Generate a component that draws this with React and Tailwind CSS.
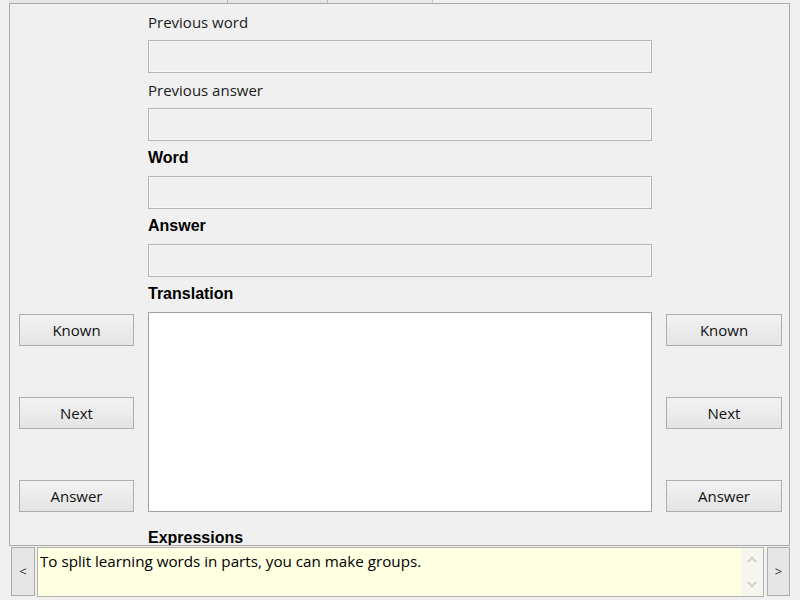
import React from 'react';

const sans = { fontFamily: '"Open Sans", "Noto Sans", sans-serif' };
const arial = { fontFamily: '"Liberation Sans", Arial, sans-serif' };

function Field({ label, bold }) {
  return (
    <>
      <div
        className={`h-[35px] pt-[7px] leading-[20px] ${
          bold ? 'text-[16px] font-bold text-black' : 'text-[15px] text-[#1a1a1a]'
        }`}
        style={bold ? arial : undefined}
      >
        {label}
      </div>
      <div className="h-[33px] w-[504px] shrink-0 border border-[#b5b5b5] bg-[#f0f0f0] shadow-[inset_0_0_0_1px_#f7f7f7]" />
    </>
  );
}

function Btn({ children }) {
  return (
    <button className="h-[32px] w-full border border-[#adadad] bg-gradient-to-b from-[#f2f2f2] to-[#e4e4e4] text-[15px] leading-none text-[#111]">
      {children}
    </button>
  );
}

function ButtonColumn({ width }) {
  return (
    <div className={`flex h-[200px] shrink-0 flex-col justify-between pt-[2px] ${width}`}>
      <Btn>Known</Btn>
      <Btn>Next</Btn>
      <Btn>Answer</Btn>
    </div>
  );
}

export default function App() {
  return (
    <div className="flex h-[600px] w-[800px] flex-col overflow-hidden bg-[#f0f0f0]" style={sans}>
      {/* tab strip bottom */}
      <div className="flex h-[3px] shrink-0 pl-[9px]">
        <div className="h-full w-[219px] border-r border-[#b8b8b8] bg-[#e6e6e6]" />
        <div className="h-full w-[100px] border-r border-[#b8b8b8] bg-[#e6e6e6]" />
        <div className="h-full w-[105px] border-r border-[#c8c8c8] bg-[#e9e9e9]" />
      </div>

      {/* main panel */}
      <div className="ml-[9px] mr-[10px] h-[543px] shrink-0 overflow-hidden border border-[#a9a9a9] bg-[#f0f0f0]">
        <div className="flex flex-col pt-[1px]">
          <div className="flex flex-col pl-[138px]">
            <Field label="Previous word" />
            <Field label="Previous answer" />
            <Field label="Word" bold />
            <Field label="Answer" bold />
            <div className="h-[35px] pt-[7px] text-[16px] font-bold leading-[20px] text-black" style={arial}>
              Translation
            </div>
          </div>

          <div className="flex gap-[14px] pl-[9px]">
            <ButtonColumn width="w-[115px]" />
            <div className="h-[200px] w-[504px] shrink-0 border border-[#a0a0a0] bg-white" />
            <ButtonColumn width="w-[116px]" />
          </div>

          <div
            className="mt-[9px] h-[35px] pl-[138px] pt-[7px] text-[16px] font-bold leading-[20px] text-black"
            style={arial}
          >
            Expressions
          </div>
        </div>
      </div>

      {/* hint bar */}
      <div className="flex gap-[2px] pl-[11px] pt-[1px]">
        <button className="h-[49px] w-[24px] shrink-0 border border-[#acacac] bg-[#e6e6e6] text-[13px] text-[#333]">
          &lt;
        </button>
        <div className="flex h-[50px] w-[727px] shrink-0 border border-[#b0b0b0] bg-[#ffffe1]">
          <div className="flex-1 pl-[2px] pt-[3px] text-[15.2px] leading-[20px] text-black">
            To split learning words in parts, you can make groups.
          </div>
          <div className="flex w-[22px] flex-col items-center justify-between bg-[#f6f6ee] py-[8px]">
            <svg width="10" height="7" viewBox="0 0 10 7" fill="none" stroke="#c4c4c4" strokeWidth="1.3">
              <path d="M1 6 L5 1.5 L9 6" />
            </svg>
            <svg width="10" height="7" viewBox="0 0 10 7" fill="none" stroke="#c4c4c4" strokeWidth="1.3">
              <path d="M1 1 L5 5.5 L9 1" />
            </svg>
          </div>
        </div>
        <button className="ml-[1px] h-[49px] w-[23px] shrink-0 border border-[#acacac] bg-[#e6e6e6] text-[13px] text-[#333]">
          &gt;
        </button>
      </div>
    </div>
  );
}
